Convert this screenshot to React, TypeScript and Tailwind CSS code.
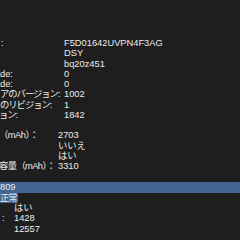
import React from 'react';

type Row = {
  label?: string;
  value?: string;
  labelCls?: string;
};

const font = "font-['Liberation_Sans','Noto_Sans_CJK_JP',sans-serif]";

const modelRows: Row[] = [
  { label: ':', value: 'F5D01642UVPN4F3AG', labelCls: 'pl-[1px]' },
  { value: 'DSY' },
  { value: 'bq20z451' },
  { label: 'de:', value: '0' },
  { label: 'de:', value: '0' },
  { label: 'アのバージョン:', value: '1002', labelCls: 'tracking-[-1px]' },
  { label: 'のリビジョン:', value: '1', labelCls: 'tracking-[-1px]' },
  { label: 'ョン:', value: '1842', labelCls: '-ml-[1px] tracking-[-1px]' },
];

const chargeRows: Row[] = [
  { label: '（mAh）：', value: '2703', labelCls: '-ml-[1px] tracking-[-0.5px]' },
  { value: 'いいえ' },
  { value: 'はい' },
  { label: '容量（mAh）：', value: '3310', labelCls: '-ml-[1px] tracking-[-0.6px]' },
];

const LineRow = ({ row, col }: { row: Row; col: string }) => (
  <div className={`grid h-[10.28px] leading-[10.28px] ${col}`}>
    <span className={`whitespace-nowrap ${row.labelCls ?? ''}`}>{row.label}</span>
    <span className="whitespace-nowrap">{row.value}</span>
  </div>
);

export default function App() {
  return (
    <div
      className={`h-[240px] w-[240px] overflow-hidden bg-[#1e1e1e] pt-[38px] text-[9.3px] text-[#ececec] ${font}`}
    >
      {modelRows.map((r, i) => (
        <LineRow key={i} row={r} col="grid-cols-[64px_1fr]" />
      ))}
      <div className="h-[10.28px]" />
      {chargeRows.map((r, i) => (
        <LineRow key={i} row={r} col="grid-cols-[58px_1fr]" />
      ))}
      <div className="h-[10.28px]" />

      {/* selected text */}
      <div className="h-[11px] bg-[#416593] leading-[11px]">809</div>
      <div className="h-[10.28px] leading-[10.28px]">
        <span className="inline-block h-[10.5px] bg-[#416593] pr-[1px] tracking-[-1px]">正常</span>
      </div>

      <div className="grid h-[10.28px] grid-cols-[14px_1fr] leading-[10.28px]">
        <span />
        <span>はい</span>
      </div>
      <div className="grid h-[10.28px] grid-cols-[14px_1fr] leading-[10.28px]">
        <span className="pl-[2px]">:</span>
        <span>1428</span>
      </div>
      <div className="grid h-[10.28px] grid-cols-[14px_1fr] leading-[10.28px]">
        <span />
        <span>12557</span>
      </div>
    </div>
  );
}
